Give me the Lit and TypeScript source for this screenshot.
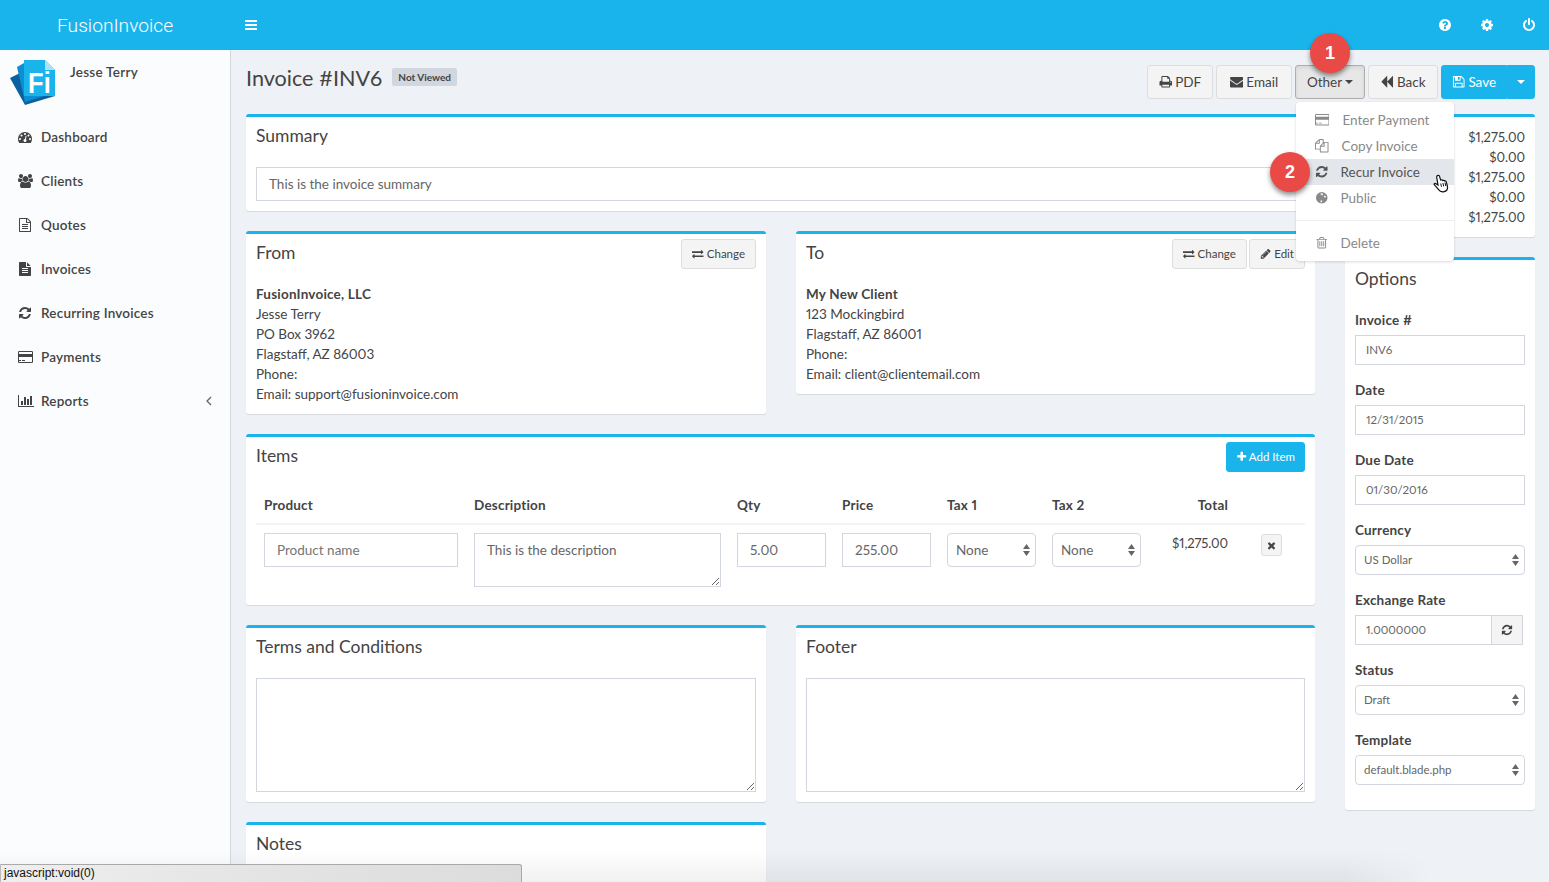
import { LitElement, html, css } from 'lit';
import { customElement } from 'lit/decorators.js';

// font awesome 4 glyphs
const ICONS: Record<string, [string, number]> = {
  bars: ['M1664 1344v128q0 26-19 45t-45 19h-1408q-26 0-45-19t-19-45v-128q0-26 19-45t45-19h1408q26 0 45 19t19 45zm0-512v128q0 26-19 45t-45 19h-1408q-26 0-45-19t-19-45v-128q0-26 19-45t45-19h1408q26 0 45 19t19 45zm0-512v128q0 26-19 45t-45 19h-1408q-26 0-45-19t-19-45v-128q0-26 19-45t45-19h1408q26 0 45 19t19 45z', 1792],
  refresh: ['M1639 1056q0 5-1 7-64 268-268 434.5t-478 166.5q-146 0-282.5-55t-243.5-157l-129 129q-19 19-45 19t-45-19-19-45v-448q0-26 19-45t45-19h448q26 0 45 19t19 45-19 45l-137 137q71 66 161 102t187 36q134 0 250-65t186-179q11-17 53-117 8-23 30-23h192q13 0 22.5 9.5t9.5 22.5zm25-800v448q0 26-19 45t-45 19h-448q-26 0-45-19t-19-45 19-45l138-138q-148-137-349-137-134 0-250 65t-186 179q-11 17-53 117-8 23-30 23h-199q-13 0-22.5-9.5t-9.5-22.5v-7q65-268 270-434.5t480-166.5q146 0 284 55.5t245 156.5l130-129q19-19 45-19t45 19 19 45z', 1792],
  help: ['M1024 1376v-192q0-14-9-23t-23-9h-192q-14 0-23 9t-9 23v192q0 14 9 23t23 9h192q14 0 23-9t9-23zm256-672q0-88-55.5-163t-138.5-116-170-41q-243 0-371 213-15 24 8 42l132 100q7 6 19 6 16 0 25-12 53-68 86-92 34-24 86-24 48 0 85.5 26t37.5 59q0 38-20 61t-68 45q-63 28-115.5 86.5t-52.5 125.5v36q0 14 9 23t23 9h192q14 0 23-9t9-23q0-19 21.5-49.5t54.5-49.5q32-18 49-28.5t46-35 44.5-48 28-60.5 12.5-81zm384 192q0 209-103 385.5t-279.5 279.5-385.5 103-385.5-103-279.5-279.5-103-385.5 103-385.5 279.5-279.5 385.5-103 385.5 103 279.5 279.5 103 385.5z', 1792],
  cog: ['M1152 896q0-106-75-181t-181-75-181 75-75 181 75 181 181 75 181-75 75-181zm512-109v222q0 12-8 23t-20 13l-185 28q-19 54-39 91 35 50 107 138 10 12 10 25t-9 23q-27 37-99 108t-94 71q-12 0-26-9l-138-108q-44 23-91 38-16 136-29 186-7 28-36 28h-222q-14 0-24.5-8.5t-11.5-21.5l-28-184q-49-16-90-37l-141 107q-10 9-25 9-14 0-25-11-126-114-165-168-7-10-7-23 0-12 8-23 15-21 51-66.5t54-70.5q-27-50-41-99l-183-27q-13-2-21-12.5t-8-23.5v-222q0-12 8-23t19-13l186-28q14-46 39-92-40-57-107-138-10-12-10-24 0-10 9-23 26-36 98.5-107.5t94.5-71.5q13 0 26 10l138 107q44-23 91-38 16-136 29-186 7-28 36-28h222q14 0 24.5 8.5t11.5 21.5l28 184q49 16 90 37l142-107q9-9 24-9 13 0 25 10 129 119 165 170 7 8 7 22 0 12-8 23-15 21-51 66.5t-54 70.5q26 50 41 98l183 28q13 2 21 12.5t8 23.5z', 1792],
  power: ['M1664 896q0 156-61 298t-164 245-245 164-298 61-298-61-245-164-164-245-61-298q0-182 80.5-343t226.5-270q43-32 95.5-25t83.5 50q32 42 24.5 94.5t-49.5 84.5q-98 74-151.5 181t-53.5 228q0 104 40.5 198.5t109.5 163.5 163.5 109.5 198.5 40.5 198.5-40.5 163.5-109.5 109.5-163.5 40.5-198.5q0-121-53.5-228t-151.5-181q-42-32-49.5-84.5t24.5-94.5q31-43 84-50t95 25q146 109 226.5 270t80.5 343zm-640-768v640q0 52-38 90t-90 38-90-38-38-90v-640q0-52 38-90t90-38 90 38 38 90z', 1792],
  dashboard: ['M384 1152q0-53-37.5-90.5t-90.5-37.5-90.5 37.5-37.5 90.5 37.5 90.5 90.5 37.5 90.5-37.5 37.5-90.5zm192-448q0-53-37.5-90.5t-90.5-37.5-90.5 37.5-37.5 90.5 37.5 90.5 90.5 37.5 90.5-37.5 37.5-90.5zm428 481l101-382q6-26-7.5-48.5t-38.5-29.5-48 6.5-30 39.5l-101 382q-60 5-107 43.5t-63 98.5q-20 77 20 146t117 89 146-20 89-117q16-60-6-117t-72-91zm660-33q0-53-37.5-90.5t-90.5-37.5-90.5 37.5-37.5 90.5 37.5 90.5 90.5 37.5 90.5-37.5 37.5-90.5zm-640-640q0-53-37.5-90.5t-90.5-37.5-90.5 37.5-37.5 90.5 37.5 90.5 90.5 37.5 90.5-37.5 37.5-90.5zm448 192q0-53-37.5-90.5t-90.5-37.5-90.5 37.5-37.5 90.5 37.5 90.5 90.5 37.5 90.5-37.5 37.5-90.5zm320 448q0 261-141 483-19 29-54 29h-1402q-35 0-54-29-141-221-141-483 0-182 71-348t191-286 286-191 348-71 348 71 286 191 191 286 71 348z', 1792],
  users: ['M593 896q-162 5-265 128h-134q-82 0-138-40.5t-56-118.5q0-353 124-353 6 0 43.5 21t97.5 42.5 119 21.5q67 0 133-23-5 37-5 66 0 139 81 256zm1071 637q0 120-73 189.5t-194 69.5h-874q-121 0-194-69.5t-73-189.5q0-53 3.5-103.5t14-109 26.5-108.5 43-97.5 62-81 85.5-53.5 111.5-20q10 0 43 21.5t73 48 107 48 135 21.5 135-21.5 107-48 73-48 43-21.5q61 0 111.5 20t85.5 53.5 62 81 43 97.5 26.5 108.5 14 109 3.5 103.5zm-1024-1277q0 106-75 181t-181 75-181-75-75-181 75-181 181-75 181 75 75 181zm704 384q0 159-112.5 271.5t-271.5 112.5-271.5-112.5-112.5-271.5 112.5-271.5 271.5-112.5 271.5 112.5 112.5 271.5zm576 225q0 78-56 118.5t-138 40.5h-134q-103-123-265-128 81-117 81-256 0-29-5-66 66 23 133 23 59 0 119-21.5t97.5-42.5 43.5-21q124 0 124 353zm-128-609q0 106-75 181t-181 75-181-75-75-181 75-181 181-75 181 75 75 181z', 1920],
  fileo: ['M1596 380q28 28 48 76t20 88v1152q0 40-28 68t-68 28h-1344q-40 0-68-28t-28-68v-1600q0-40 28-68t68-28h896q40 0 88 20t76 48zm-444-244v376h376q-10-29-22-41l-313-313q-12-12-41-22zm384 1528v-1024h-416q-40 0-68-28t-28-68v-416h-768v1536h1280zm-1024-864q0-14 9-23t23-9h704q14 0 23 9t9 23v64q0 14-9 23t-23 9h-704q-14 0-23-9t-9-23v-64zm736 224q14 0 23 9t9 23v64q0 14-9 23t-23 9h-704q-14 0-23-9t-9-23v-64q0-14 9-23t23-9h704zm0 256q14 0 23 9t9 23v64q0 14-9 23t-23 9h-704q-14 0-23-9t-9-23v-64q0-14 9-23t23-9h704z', 1792],
  file: ['M1596 476q14 14 28 36h-472v-472q22 14 36 28zm-476 164h544v1056q0 40-28 68t-68 28h-1344q-40 0-68-28t-28-68v-1600q0-40 28-68t68-28h800v544q0 40 28 68t68 28zm160 736v-64q0-14-9-23t-23-9h-704q-14 0-23 9t-9 23v64q0 14 9 23t23 9h704q14 0 23-9t9-23zm0-256v-64q0-14-9-23t-23-9h-704q-14 0-23 9t-9 23v64q0 14 9 23t23 9h704q14 0 23-9t9-23zm0-256v-64q0-14-9-23t-23-9h-704q-14 0-23 9t-9 23v64q0 14 9 23t23 9h704q14 0 23-9t9-23z', 1792],
  card: ['M1760 128q66 0 113 47t47 113v1216q0 66-47 113t-113 47h-1600q-66 0-113-47t-47-113v-1216q0-66 47-113t113-47h1600zm-1600 128q-13 0-22.5 9.5t-9.5 22.5v224h1664v-224q0-13-9.5-22.5t-22.5-9.5h-1600zm1600 1280q13 0 22.5-9.5t9.5-22.5v-608h-1664v608q0 13 9.5 22.5t22.5 9.5h1600zm-1632-128v-128h256v128h-256zm384 0v-128h384v128h-384z', 1920],
  chart: ['M640 896v512h-256v-512h256zm384-512v1024h-256v-1024h256zm1024 1152v128h-2048v-1536h128v1408h1920zm-640-896v768h-256v-768h256zm384-384v1152h-256v-1152h256z', 2048],
  print: ['M448 1536h896v-256h-896v256zm0-640h896v-384h-160q-40 0-68-28t-28-68v-160h-640v640zm1152 64q0-26-19-45t-45-19-45 19-19 45 19 45 45 19 45-19 19-45zm128 0v416q0 13-9.5 22.5t-22.5 9.5h-224v160q0 40-28 68t-68 28h-960q-40 0-68-28t-28-68v-160h-224q-13 0-22.5-9.5t-9.5-22.5v-416q0-79 56.5-135.5t135.5-56.5h64v-544q0-40 28-68t68-28h672q40 0 88 20t76 48l152 152q28 28 48 76t20 88v256h64q79 0 135.5 56.5t56.5 135.5z', 1792],
  envelope: ['M1792 710v794q0 66-47 113t-113 47h-1472q-66 0-113-47t-47-113v-794q44 49 101 87 362 246 497 345 57 42 92.5 65.5t94.5 48 110 24.5h2q51 0 110-24.5t94.5-48 92.5-65.5q170-123 498-345 57-39 100-87zm0-294q0 79-49 151t-122 123q-376 261-468 325-10 7-42.5 30.5t-54 38-52 32.5-57.5 27-50 9h-2q-23 0-50-9t-57.5-27-52-32.5-54-38-42.5-30.5q-91-64-262-182.5t-205-142.5q-62-42-117-115.5t-55-136.5q0-78 41.5-130t118.5-52h1472q65 0 112.5 47t47.5 113z', 1792],
  backward: ['M1683 141q19-19 32-13t13 32v1472q0 26-13 32t-32-13l-710-710q-9-9-13-19v710q0 26-13 32t-32-13l-710-710q-19-19-19-45t19-45l710-710q19-19 32-13t13 32v710q4-10 13-19z', 1792],
  save: ['M512 1536h768v-384h-768v384zm896 0h128v-896q0-14-10-38.5t-20-34.5l-281-281q-10-10-34-20t-39-10v416q0 40-28 68t-68 28h-576q-40 0-68-28t-28-68v-416h-128v1280h128v-416q0-40 28-68t68-28h832q40 0 68 28t28 68v416zm-384-928v-320q0-13-9.5-22.5t-22.5-9.5h-192q-13 0-22.5 9.5t-9.5 22.5v320q0 13 9.5 22.5t22.5 9.5h192q13 0 22.5-9.5t9.5-22.5zm640 32v928q0 40-28 68t-68 28h-1344q-40 0-68-28t-28-68v-1344q0-40 28-68t68-28h928q40 0 88 20t76 48l280 280q28 28 48 76t20 88z', 1792],
  copy: ['M1696 384q40 0 68 28t28 68v1216q0 40-28 68t-68 28h-960q-40 0-68-28t-28-68v-288h-544q-40 0-68-28t-28-68v-672q0-40 20-88t48-76l408-408q28-28 76-48t88-20h416q40 0 68 28t28 68v328q68-40 128-40h416zm-544 213l-299 299h299v-299zm-640-384l-299 299h299v-299zm196 647l316-316v-416h-384v416q0 40-28 68t-68 28h-416v640h512v-256q0-40 20-88t48-76zm956 804v-1152h-384v416q0 40-28 68t-68 28h-416v640h896z', 1792],
  globe: ['M896 128a768 768 0 1 1 0 1536a768 768 0 1 1 0-1536zm60 170q-90-10-190 10l-60 110 150 60 40 120 130-30 40-150zm340 300l-120 90 40 140 160 50 90-70q-30-120-170-210zm-360 620l-170 30-40 200 80 90 130-100z', 1792],
  trash: ['M704 736v576q0 14-9 23t-23 9h-64q-14 0-23-9t-9-23v-576q0-14 9-23t23-9h64q14 0 23 9t9 23zm256 0v576q0 14-9 23t-23 9h-64q-14 0-23-9t-9-23v-576q0-14 9-23t23-9h64q14 0 23 9t9 23zm256 0v576q0 14-9 23t-23 9h-64q-14 0-23-9t-9-23v-576q0-14 9-23t23-9h64q14 0 23 9t9 23zm128 724v-948h-896v948q0 22 7 40.5t14.5 27 10.5 8.5h832q3 0 10.5-8.5t14.5-27 7-40.5zm-672-1076h448l-48-117q-7-9-17-11h-317q-10 2-17 11zm928 32v64q0 14-9 23t-23 9h-96v948q0 83-47 143.5t-113 60.5h-832q-66 0-113-58.5t-47-141.5v-952h-96q-14 0-23-9t-9-23v-64q0-14 9-23t23-9h309l70-167q15-37 54-63t79-26h320q40 0 79 26t54 63l70 167h309q14 0 23 9t9 23z', 1792],
  exchange: ['M1792 1184v192q0 13-9.5 22.5t-22.5 9.5h-1376v192q0 13-9.5 22.5t-22.5 9.5q-12 0-24-10l-319-320q-9-9-9-22 0-14 9-23l320-320q9-9 23-9 13 0 22.5 9.5t9.5 22.5v192h1376q13 0 22.5 9.5t9.5 22.5zm0-544q0 14-9 23l-320 320q-9 9-23 9-13 0-22.5-9.5t-9.5-22.5v-192h-1376q-13 0-22.5-9.5t-9.5-22.5v-192q0-13 9.5-22.5t22.5-9.5h1376v-192q0-14 9-23t23-9q12 0 24 10l319 319q9 9 9 23z', 1792],
  pencil: ['M491 1536l91-91-235-235-91 91v107h128v128h107zm523-928q0-22-22-22-10 0-17 7l-542 542q-7 7-7 17 0 22 22 22 10 0 17-7l542-542q7-7 7-17zm-54-192l416 416-832 832h-416v-416zm683 96q0 53-37 90l-166 166-416-416 166-165q36-38 90-38 53 0 91 38l235 234q37 39 37 91z', 1792],
  plus: ['M1600 736v192q0 40-28 68t-68 28h-416v416q0 40-28 68t-68 28h-192q-40 0-68-28t-28-68v-416h-416q-40 0-68-28t-28-68v-192q0-40 28-68t68-28h416v-416q0-40 28-68t68-28h192q40 0 68 28t28 68v416h416q40 0 68 28t28 68z', 1792],
  times: ['M1490 1322q0 40-28 68l-136 136q-28 28-68 28t-68-28l-294-294-294 294q-28 28-68 28t-68-28l-136-136q-28-28-28-68t28-68l294-294-294-294q-28-28-28-68t28-68l136-136q28-28 68-28t68 28l294 294 294-294q28-28 68-28t68 28l136 136q28 28 28 68t-28 68l-294 294 294 294q28 28 28 68z', 1792],
};

const icon = (name: string) => {
  const [d, w] = ICONS[name];
  return html`<svg class="i" viewBox="0 0 ${w} 1792"><path d=${d}></path></svg>`;
};

const caret = html`<span class="caret"></span>`;

const updown = html`<svg class="updown" viewBox="0 0 7 12"><path d="M3.5 0L7 5H0zM3.5 12L0 7h7z"></path></svg>`;

const NAV = [
  ['dashboard', 'Dashboard'],
  ['users', 'Clients'],
  ['fileo', 'Quotes'],
  ['file', 'Invoices'],
  ['refresh', 'Recurring Invoices'],
  ['card', 'Payments'],
  ['chart', 'Reports'],
];

const OPTIONS = [
  ['Invoice #', 'INV6', 'text'],
  ['Date', '12/31/2015', 'text'],
  ['Due Date', '01/30/2016', 'text'],
  ['Currency', 'US Dollar', 'select'],
  ['Exchange Rate', '1.0000000', 'addon'],
  ['Status', 'Draft', 'select'],
  ['Template', 'default.blade.php', 'select'],
];

@customElement('app-root')
export class AppRoot extends LitElement {
  static styles = css`
    :host {
      display: block;
      position: relative;
      height: 882px;
      overflow: hidden;
      background: #eef1f6;
      color: #444;
      font-family: 'Lato', 'Noto Sans', sans-serif;
      font-size: 13.5px;
      line-height: 20px;
      font-variant-numeric: proportional-nums;
    }
    * { box-sizing: border-box; }
    .i { height: 1em; width: auto; fill: currentColor; display: inline-block; vertical-align: -0.13em; flex: none; }

    .topbar { height: 50px; background: #1ab4ec; color: #fff; display: flex; align-items: center; }
    .brand { width: 230px; padding-left: 57px; font: 300 19.2px 'Roboto', sans-serif; }
    .burger { margin-left: 14px; font-size: 14px; display: flex; }
    .tools { margin-left: auto; display: flex; gap: 28px; padding-right: 13px; font-size: 14px; }

    .layout { display: flex; height: 832px; }
    .sidebar { width: 231px; flex: none; background: #fbfcfe; border-right: 1px solid #d2d6de; }
    .user { height: 65px; padding: 10px 0 0 10px; display: flex; gap: 14px; font-weight: 600; letter-spacing: .25px; }
    .logo { width: 46px; height: 46px; flex: none; }
    .user span { margin-top: 2px; }
    .nav a { height: 44px; display: flex; align-items: center; padding: 0 18px; font-weight: 600; font-size: 13.5px; letter-spacing: .2px; color: #444; }
    .nav .ico { width: 23px; font-size: 14px; display: flex; }
    .nav .angle { margin-left: auto; width: 6px; height: 10px; fill: none; stroke: #666; stroke-width: 1.3; }

    .main { flex: 1; padding: 15px 14px 0 15px; min-width: 0; }
    .head { display: flex; align-items: flex-start; height: 34px; margin-bottom: 15px; }
    h1 { margin: 0; font-size: 21.6px; font-weight: 400; line-height: 26px; }
    .badge { margin: 3px 0 0 10px; height: 18px; padding: 0 6px; background: #d2d6de; border-radius: 2px; font-size: 10px; font-weight: 700; line-height: 18px; }
    .actions { margin-left: auto; display: flex; gap: 3px; }

    .btn { height: 34px; padding: 0 12px; display: inline-flex; align-items: center; gap: 3px; background: #f4f4f4; border: 1px solid #ddd; border-radius: 3px; color: #444; white-space: nowrap; }
    .btn.sm { height: 30px; padding: 0 10px; font-size: 11.5px; }
    .btn.sm.primary { padding: 0 9px; gap: 1px; }
    .btn.on { background: #e7e7e7; border-color: #adadad; box-shadow: inset 0 2px 4px rgba(0,0,0,.08); }
    .btn.primary { background: #1ab4ec; border-color: #1ab4ec; color: #fff; }
    .actions .btn { justify-content: center; padding: 0; }
    .w66 { width: 66px; }
    .w70 { width: 70px; }
    .w76 { width: 76px; }
    .split { display: flex; }
    .split .btn:first-child { border-radius: 3px 0 0 3px; }
    .split .btn:last-child { border-radius: 0 3px 3px 0; width: 28px; }
    .caret { width: 0; height: 0; border-top: 4px solid currentColor; border-left: 4px solid transparent; border-right: 4px solid transparent; }

    .other { position: relative; }
    .marker { position: absolute; width: 40px; height: 40px; border-radius: 50%; background: #ea4a46; color: #fff; font: 700 18px/40px 'Liberation Sans', sans-serif; text-align: center; box-shadow: 0 3px 5px rgba(0,0,0,.45); z-index: 3; }
    .marker.one { left: 15px; top: -32px; }
    .marker.two { left: -26px; top: -7px; }

    .menu { position: absolute; left: 1px; top: 37px; width: 158px; height: 159px; padding-top: 5px; background: #fff; border-radius: 4px; box-shadow: 0 1px 3px rgba(0,0,0,.15); z-index: 2; color: #8a8a8a; }
    .menu a { height: 26px; display: flex; align-items: center; padding-left: 19px; position: relative; }
    .menu a.hover { background: #e3e6eb; color: #555; }
    .menu hr { margin: 9px 0; border: 0; border-top: 1px solid #eee; }
    .menu a:last-child { margin-top: 9px; }
    .menu .l13 { margin-left: 13px; }
    .menu .l12 { margin-left: 12px; }
    .hand { position: absolute; left: 137px; top: 15px; width: 16px; height: 19px; }

    .columns { display: flex; gap: 30px; align-items: flex-start; }
    .left { flex: 1; min-width: 0; display: flex; flex-direction: column; gap: 20px; }
    .right { width: 190px; flex: none; display: flex; flex-direction: column; gap: 20px; }
    .row { display: grid; grid-template-columns: 520px 519px; gap: 30px; align-items: start; }

    .box { background: #fff; border-top: 3px solid #1ab4ec; border-radius: 3px; box-shadow: 0 1px 1px rgba(0,0,0,.1); }
    .box-head { height: 40px; padding: 0 10px; display: flex; align-items: center; justify-content: space-between; gap: 2px; }
    .box-head h3 { margin: 0 auto 2px 0; font-size: 17.5px; font-weight: 400; }
    .box-body { padding: 10px; }
    .box-body strong { font-weight: 700; letter-spacing: .2px; }
    .spacer { height: 134px; }

    input, textarea { display: block; width: 100%; font: inherit; color: #666; border: 1px solid #d2d6de; border-radius: 0; background: #fff; outline: 0; padding: 6px 12px; height: 34px; }
    textarea { resize: vertical; }
    .text-area { height: 114px; }

    .items { display: grid; grid-template-columns: 210px 263px 105px 105px 105px 105px 87px 69px; }
    .items > div { padding: 8px; }
    .items .th { font-weight: 700; border-bottom: 2px solid #f4f4f4; letter-spacing: .2px; }
    .items .num { text-align: right; }
    .items .amount { font-size: 13px; letter-spacing: -.1px; }
    .items .desc { height: 54px; }
    .sel { height: 34px; display: flex; align-items: center; justify-content: space-between; padding: 0 5px 0 8px; border: 1px solid #d2d6de; border-radius: 4px; color: #666; background: #fff; }
    .updown { width: 7px; height: 12px; fill: #666; }
    .del { margin: 1px 0 0 17px; width: 21px; height: 22px; background: #f4f4f4; border: 1px solid #ddd; border-radius: 3px; display: flex; align-items: center; justify-content: center; font-size: 11px; color: #444; }

    .totals { height: 123px; padding: 10px 10px 0; text-align: right; font-size: 13px; }
    .form { padding: 10px; }
    .form label { display: block; font-weight: 700; margin-bottom: 5px; letter-spacing: .2px; }
    .form .field { margin-bottom: 15px; }
    .form input, .form .sel { height: 30px; font-size: 11.5px; padding: 0 10px 2px; }
    .form .sel { padding: 0 5px 0 8px; }
    .group { display: flex; width: 168px; }
    .group input { flex: 1; min-width: 0; }
    .group .addon { width: 31px; height: 30px; flex: none; border: 1px solid #d2d6de; border-left: 0; background: #f4f4f4; display: flex; align-items: center; justify-content: center; font-size: 12px; }

    .fade { position: absolute; left: 0; bottom: 0; width: 1430px; height: 32px; pointer-events: none; background: linear-gradient(rgba(0,0,0,0), rgba(0,0,0,.055)); border-bottom: 1px solid rgba(0,0,0,.06); -webkit-mask-image: linear-gradient(90deg, #000 94%, transparent); mask-image: linear-gradient(90deg, #000 94%, transparent); }
    .status { position: absolute; left: 0; bottom: 0; width: 522px; height: 18px; padding-left: 3px; background: linear-gradient(90deg, #efefef, #e4e4e4 50%, #dcdcdc); border: 1px solid #a9a9a9; border-left-color: #bbb; border-bottom: 0; border-radius: 0 3px 0 0; color: #111; font: 12px/17px 'Liberation Sans', sans-serif; }
  `;

  renderOption([label, value, kind]: string[]) {
    let control;
    if (kind === 'select') {
      control = html`<div class="sel"><span>${value}</span>${updown}</div>`;
    } else if (kind === 'addon') {
      control = html`<div class="group"><input .value=${value} /><div class="addon">${icon('refresh')}</div></div>`;
    } else {
      control = html`<input .value=${value} />`;
    }
    return html`<div class="field"><label>${label}</label>${control}</div>`;
  }

  render() {
    return html`
      <header class="topbar">
        <div class="brand">FusionInvoice</div>
        <div class="burger">${icon('bars')}</div>
        <div class="tools">${icon('help')}${icon('cog')}${icon('power')}</div>
      </header>
      <div class="layout">
        <aside class="sidebar">
          <div class="user">
            <svg class="logo" viewBox="0 0 46 46">
              <path d="M0 18L14 11V36H45L15 45z" fill="#0a619f"></path>
              <path d="M7 7L14 3V36H34L15 42z" fill="#0b8fd0"></path>
              <path d="M14 0H35L45 10V36H14z" fill="#1ab4ec"></path>
              <path d="M35 0L45 10H35z" fill="#a8e3fa"></path>
              <text x="18" y="33" font-family="Liberation Sans" font-weight="700" font-size="29" textLength="23" lengthAdjust="spacingAndGlyphs" fill="#fff">Fi</text>
            </svg>
            <span>Jesse Terry</span>
          </div>
          <nav class="nav">
            ${NAV.map(([ic, label]) => html`
              <a><span class="ico">${icon(ic)}</span>${label}${label === 'Reports'
                ? html`<svg class="angle" viewBox="0 0 6 10"><path d="M5 1L1 5l4 4"></path></svg>`
                : ''}</a>
            `)}
          </nav>
        </aside>
        <main class="main">
          <div class="head">
            <h1>Invoice #INV6</h1>
            <span class="badge">Not Viewed</span>
            <div class="actions">
              <div class="btn w66">${icon('print')}PDF</div>
              <div class="btn w76">${icon('envelope')}Email</div>
              <div class="other">
                <div class="btn on w70">Other${caret}</div>
                <div class="marker one">1</div>
                <div class="menu">
                  <a>${icon('card')}<span class="l13">Enter Payment</span></a>
                  <a>${icon('copy')}<span class="l13">Copy Invoice</span></a>
                  <a class="hover">
                    <div class="marker two">2</div>
                    ${icon('refresh')}<span class="l12">Recur Invoice</span>
                    <svg class="hand" viewBox="0 0 16 19">
                      <path d="M4.500 1.600c.9-.6 1.900 0 2.100.9l1 3.600.3-.1c.7-.5 1.600-.2 1.900.5.6-.4 1.400-.2 1.800.5.6-.3 1.400 0 1.600.7l1.200 4.500c.5 2.600-.9 4.800-3.300 5.400-2.300.6-4.200-.1-5.500-2L1.300 10.700c-.5-.8.4-1.800 1.300-1.300l2.400 1.600-1.300-7.600c-.1-.7.2-1.400.8-1.800z" fill="#fff" stroke="#111" stroke-width="1.200"></path>
                      <path d="M7.700 9.500l.8 3.300M9.900 9l.8 3.300M12 8.700l.8 3.300" stroke="#111" stroke-width="1" fill="none"></path>
                    </svg>
                  </a>
                  <a>${icon('globe')}<span class="l12">Public</span></a>
                  <hr />
                  <a>${icon('trash')}<span class="l12">Delete</span></a>
                </div>
              </div>
              <div class="btn w70">${icon('backward')}Back</div>
              <div class="split">
                <div class="btn primary w66">${icon('save')}Save</div>
                <div class="btn primary">${caret}</div>
              </div>
            </div>
          </div>
          <div class="columns">
            <div class="left">
              <section class="box">
                <div class="box-head"><h3>Summary</h3></div>
                <div class="box-body"><input .value=${'This is the invoice summary'} /></div>
              </section>
              <div class="row">
                <section class="box">
                  <div class="box-head">
                    <h3>From</h3>
                    <div class="btn sm">${icon('exchange')}Change</div>
                  </div>
                  <div class="box-body">
                    <strong>FusionInvoice, LLC</strong><br />
                    Jesse Terry<br />
                    PO Box 3962<br />
                    Flagstaff, AZ 86003<br />
                    Phone:<br />
                    Email: support@fusioninvoice.com
                  </div>
                </section>
                <section class="box">
                  <div class="box-head">
                    <h3>To</h3>
                    <div class="btn sm">${icon('exchange')}Change</div>
                    <div class="btn sm">${icon('pencil')}Edit</div>
                  </div>
                  <div class="box-body">
                    <strong>My New Client</strong><br />
                    123 Mockingbird<br />
                    Flagstaff, AZ 86001<br />
                    Phone:<br />
                    Email: client@clientemail.com
                  </div>
                </section>
              </div>
              <section class="box">
                <div class="box-head">
                  <h3>Items</h3>
                  <div class="btn sm primary">${icon('plus')}Add Item</div>
                </div>
                <div class="box-body">
                  <div class="items">
                    <div class="th">Product</div>
                    <div class="th">Description</div>
                    <div class="th">Qty</div>
                    <div class="th">Price</div>
                    <div class="th">Tax 1</div>
                    <div class="th">Tax 2</div>
                    <div class="th num">Total</div>
                    <div class="th"></div>
                    <div><input placeholder="Product name" /></div>
                    <div><textarea class="desc">This is the description</textarea></div>
                    <div><input .value=${'5.00'} /></div>
                    <div><input .value=${'255.00'} /></div>
                    <div><div class="sel"><span>None</span>${updown}</div></div>
                    <div><div class="sel"><span>None</span>${updown}</div></div>
                    <div class="num amount">$1,275.00</div>
                    <div><div class="del">${icon('times')}</div></div>
                  </div>
                </div>
              </section>
              <div class="row">
                <section class="box">
                  <div class="box-head"><h3>Terms and Conditions</h3></div>
                  <div class="box-body"><textarea class="text-area"></textarea></div>
                </section>
                <section class="box">
                  <div class="box-head"><h3>Footer</h3></div>
                  <div class="box-body"><textarea class="text-area"></textarea></div>
                </section>
              </div>
              <div class="row">
                <section class="box">
                  <div class="box-head"><h3>Notes</h3></div>
                  <div class="spacer"></div>
                </section>
              </div>
            </div>
            <div class="right">
              <section class="box totals">
                $1,275.00<br />$0.00<br />$1,275.00<br />$0.00<br />$1,275.00
              </section>
              <section class="box">
                <div class="box-head"><h3>Options</h3></div>
                <div class="form">${OPTIONS.map((o) => this.renderOption(o))}</div>
              </section>
            </div>
          </div>
        </main>
      </div>
      <div class="fade"></div>
      <div class="status">javascript:void(0)</div>
    `;
  }
}
